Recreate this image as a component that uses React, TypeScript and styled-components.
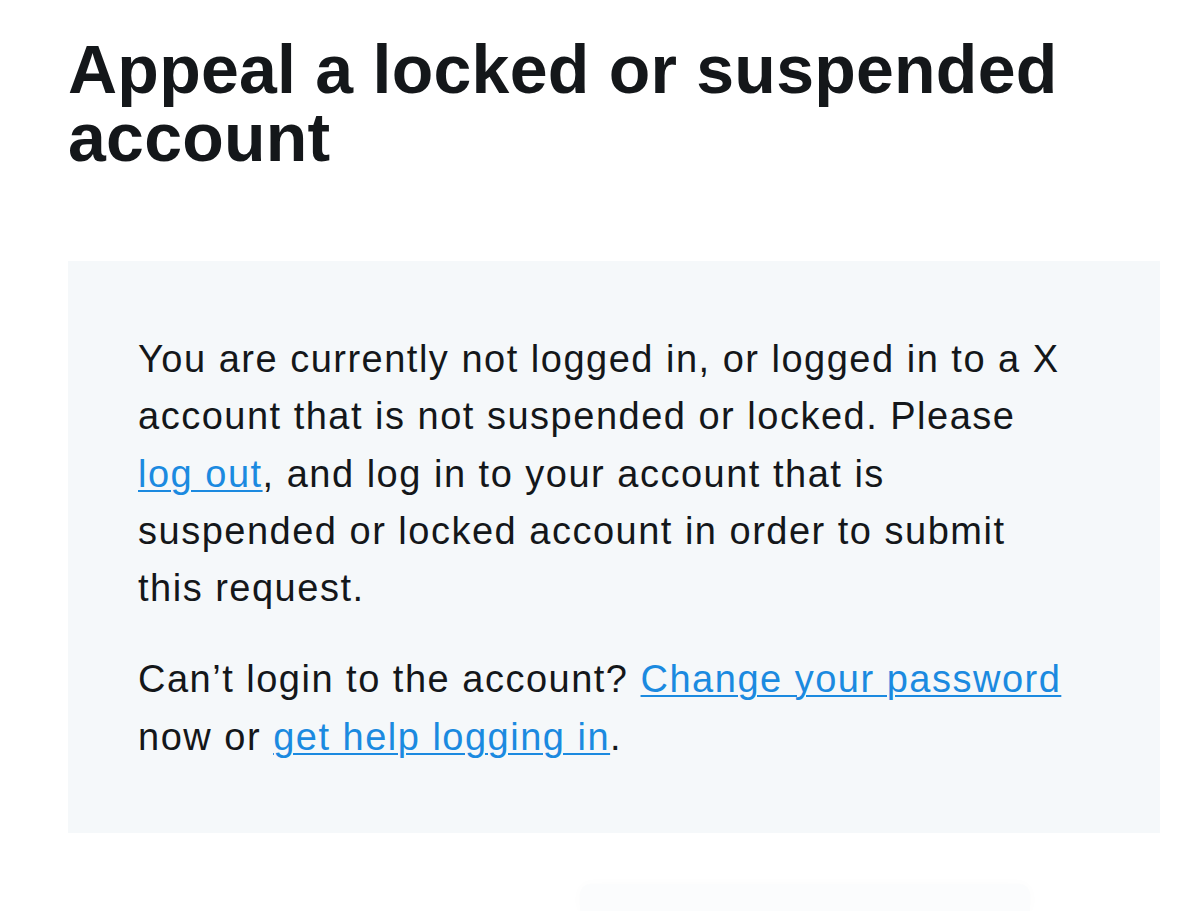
import React from "react";
import styled, { createGlobalStyle } from "styled-components";

const Global = createGlobalStyle`
  html, body { margin: 0; padding: 0; background: #ffffff; }
  body { font-family: "Liberation Sans", Arial, sans-serif; color: #14171a; overflow: hidden; }
`;

const Page = styled.div`
  width: 1200px;
  height: 911px;
  padding: 35px 40px 0 68px;
  box-sizing: border-box;
  display: flex;
  flex-direction: column;
`;

const Title = styled.h1`
  margin: 0;
  font-size: 68px;
  line-height: 68px;
  font-weight: 700;
  letter-spacing: 0.25px;
  color: #14171a;
`;

const Notice = styled.section`
  margin-top: 90px;
  width: 1092px;
  box-sizing: border-box;
  background: #f5f8fa;
  padding: 70px 82px 67px 70px;
`;

const Para = styled.p<{ $gap?: number }>`
  margin: 0;
  margin-top: ${(p) => p.$gap ?? 0}px;
  font-size: 38px;
  line-height: 57.25px;
  letter-spacing: 1.5px;
  color: #14171a;
`;

const Link = styled.a`
  color: #1b8ae0;
  text-decoration: underline;
  text-underline-offset: 3px;
  text-decoration-thickness: 2px;
`;

const Ghost = styled.div`
  margin: 51px 0 0 512px;
  width: 450px;
  height: 40px;
  background: #fbfcfd;
  border-radius: 10px 10px 0 0;
  box-shadow: 0 0 12px rgba(0, 0, 0, 0.02);
`;

export default function App() {
  return (
    <>
      <Global />
      <Page>
        <Title>Appeal a locked or suspended account</Title>
        <Notice>
          <Para>
            You are currently not logged in, or logged in to a X account that is not suspended or
            locked. Please <Link href="#">log out</Link>, and log in to your account that is
            suspended or locked account in order to submit this request.
          </Para>
          <Para $gap={34}>
            Can’t login to the account? <Link href="#">Change your password</Link> now or{" "}
            <Link href="#">get help logging in</Link>.
          </Para>
        </Notice>
        <Ghost />
      </Page>
    </>
  );
}
